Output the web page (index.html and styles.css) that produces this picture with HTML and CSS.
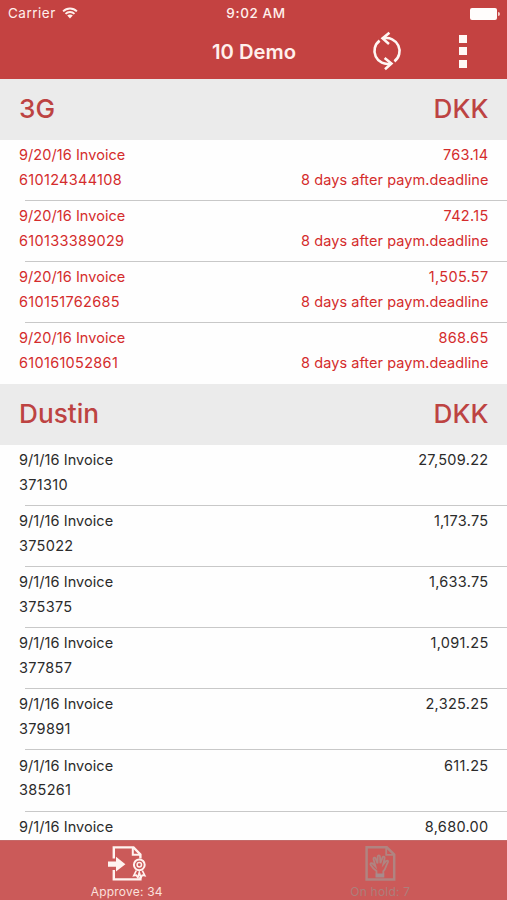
FILE: index.html
```html
<!DOCTYPE html>
<html lang="en">
<head>
    <meta charset="UTF-8">
    <meta name="viewport" content="width=device-width, initial-scale=1.0">
    <title>10 Demo</title>
    <link rel="stylesheet" href="styles.css">
</head>
<body>

    <header class="top">
        <div class="status">
            <span class="carrier">Carrier
                <svg class="wifi" viewBox="0 0 16 12" width="16" height="12">
                    <path d="M1.1 4.4a9.8 9.8 0 0 1 13.8 0M3.5 6.9a6.3 6.3 0 0 1 9 0" fill="none" stroke="#fff0ec" stroke-width="1.9"/>
                    <path d="M5.2 8.6a3.9 3.9 0 0 1 5.6 0L8 11.5z" fill="#fff0ec"/>
                </svg>
            </span>
            <span class="time">9:02 AM</span>
            <span class="battery"><i></i></span>
        </div>
        <div class="navbar">
            <h1>10 Demo</h1>
            <div class="actions">
                <svg class="refresh" viewBox="0 0 30 40" width="30" height="40" fill="none" stroke="#fff6f3" stroke-width="2.6">
                    <path d="M7.6 9.6A13 13 0 0 0 18.5 32.6"/>
                    <path d="M22.4 30.4A13 13 0 0 0 11.5 7.4"/>
                    <path d="M17.4 1.8L10.6 7.4L17 13M12.6 27L19.4 32.6L13 38.2"/>
                </svg>
                <div class="dots"><i></i><i></i><i></i></div>
            </div>
        </div>
    </header>

    <main class="list">
        <h2 class="group"><span>3G</span><span>DKK</span></h2>
        <ul class="rows overdue">
            <li><p><span>9/20/16 Invoice</span><span class="num">763.14</span></p><p><span class="num">610124344108</span><span>8 days after paym.deadline</span></p></li>
            <li><p><span>9/20/16 Invoice</span><span class="num">742.15</span></p><p><span class="num">610133389029</span><span>8 days after paym.deadline</span></p></li>
            <li><p><span>9/20/16 Invoice</span><span class="num">1,505.57</span></p><p><span class="num">610151762685</span><span>8 days after paym.deadline</span></p></li>
            <li><p><span>9/20/16 Invoice</span><span class="num">868.65</span></p><p><span class="num">610161052861</span><span>8 days after paym.deadline</span></p></li>
        </ul>
        <h2 class="group"><span>Dustin</span><span>DKK</span></h2>
        <ul class="rows">
            <li><p><span>9/1/16 Invoice</span><span class="num">27,509.22</span></p><p><span class="num">371310</span></p></li>
            <li><p><span>9/1/16 Invoice</span><span class="num">1,173.75</span></p><p><span class="num">375022</span></p></li>
            <li><p><span>9/1/16 Invoice</span><span class="num">1,633.75</span></p><p><span class="num">375375</span></p></li>
            <li><p><span>9/1/16 Invoice</span><span class="num">1,091.25</span></p><p><span class="num">377857</span></p></li>
            <li><p><span>9/1/16 Invoice</span><span class="num">2,325.25</span></p><p><span class="num">379891</span></p></li>
            <li><p><span>9/1/16 Invoice</span><span class="num">611.25</span></p><p><span class="num">385261</span></p></li>
            <li><p><span>9/1/16 Invoice</span><span class="num">8,680.00</span></p></li>
        </ul>
    </main>

    <footer class="tabs">
        <div class="tab">
            <svg viewBox="0 0 40 38" width="40" height="38" fill="none" stroke="#fff3f0" stroke-width="2.4">
                <path d="M6.8 13.5V2.4H26.5L33.4 9.5V13.5M6.8 25V34.4H33.4V32"/>
                <path d="M25.8 2.2V9.8H33.6" stroke-width="2"/>
                <path d="M1 16.6H9V11.8L18.4 19.2L9 26.6V21.8H1z" fill="#fff3f0" stroke="none"/>
                <circle cx="32.3" cy="19.8" r="5.4" stroke-width="2"/>
                <circle cx="32.3" cy="19.8" r="2.2" stroke-width="1.5"/>
                <path d="M29.3 25.5L26.8 30.6L29.3 30.2L30.9 32.6L32.3 27.5L33.8 32.6L35.3 30.2L37.8 30.6L35.3 25.5" stroke-width="1.7"/>
            </svg>
            <span>Approve: 34</span>
        </div>
        <div class="tab inactive">
            <svg viewBox="0 0 40 38" width="40" height="38" fill="none" stroke="#b08481" stroke-width="2.5">
                <path d="M6.6 2.3H26.8L34.2 9.5V34.6H6.6z"/>
                <path d="M26.2 2.2V9.8H34" stroke-width="1.8"/>
                <path d="M16.5 29V26C13 24 11.5 21 10.5 19.5C10 18 12 17.5 13 19L15.5 21.5L13.5 14C13.3 12.5 15 12 15.6 13.5L17.5 18.5L17.7 11.5C17.9 10 19.8 10 20 11.5L20.4 18.3L22.5 12.5C23.2 11 25 11.6 24.6 13.3L23.3 19.3L26.2 16C27.3 15 28.7 16 27.8 17.4C25.5 21 26 24 23.3 26.3V29" stroke-width="1.8"/>
                <path d="M15.5 28.5H24.3V32.5H15.5z" fill="#a78b8c" stroke="none"/>
            </svg>
            <span>On hold: 7</span>
        </div>
    </footer>

</body>
</html>
```
FILE: styles.css
```css
* { box-sizing: border-box; margin: 0; padding: 0; }
body { display: flex; flex-direction: column; height: 900px; overflow: hidden; background-color: #fefefe; font-family: Inter, sans-serif; color: #2b2b2b; }

/* status bar and title */
.top { flex: none; height: 79px; background-color: #c44241; color: #fff0ec; }
.status { display: grid; grid-template-columns: 1fr auto 1fr; align-items: center; height: 27px; padding: 0 8px; font-size: 13.5px; line-height: 27px; }
.carrier { display: flex; align-items: center; gap: 6px; letter-spacing: 0.5px; }
.wifi { margin-top: -2px; }
.time { padding-left: 5px; font-weight: 500; letter-spacing: 0.6px; }
.battery { display: flex; align-items: center; justify-self: end; margin-right: -1px; }
.battery i { width: 27px; height: 12px; background-color: #fffdfc; border-radius: 2px; }
.battery::after { content: ""; width: 2px; height: 4px; margin-left: 1px; background-color: #f5d0cc; border-radius: 0 2px 2px 0; }
.navbar { display: grid; grid-template-columns: 1fr auto 1fr; align-items: center; height: 48px; }
.navbar h1 { grid-column: 2; padding-left: 1px; font-size: 20.2px; font-weight: 600; line-height: 50px; }
.actions { display: flex; align-items: center; padding: 0 0 2px 76px; }
.dots { display: flex; flex-direction: column; gap: 4.5px; margin-left: 57px; }
.dots i { width: 8px; height: 8px; background-color: #fff8f6; }

/* invoices */
.list { flex: 1; min-height: 0; overflow: hidden; }
.group { display: flex; justify-content: space-between; height: 60.8px; padding: 0 18.5px 0 19px; background-color: #ebebeb; color: #bd4342; font-size: 26.2px; font-weight: 500; line-height: 60px; }
.rows { list-style: none; }
.rows li { position: relative; height: 61.1px; padding: 2.1px 18.5px 0 19px; }
.rows li + li::before { content: ""; position: absolute; top: -1px; left: 25px; right: 0; height: 1px; background-color: #c8c8c8; }
.rows p { display: flex; justify-content: space-between; height: 24.8px; font-size: 14.5px; line-height: 25px; letter-spacing: 0.06px; }
.rows .num { letter-spacing: 0.3px; }
.overdue { color: #d42c2c; }

/* bottom tabs */
.tabs { flex: none; display: flex; height: 60px; background-color: #cb5a59; border-top: 1px solid #c46a69; }
.tab { flex: 1; display: flex; flex-direction: column; align-items: center; padding-top: 4px; color: #fbe0dc; font-size: 12px; line-height: 17px; letter-spacing: 0.2px; }
.inactive { color: #ad7e7b; }
```
